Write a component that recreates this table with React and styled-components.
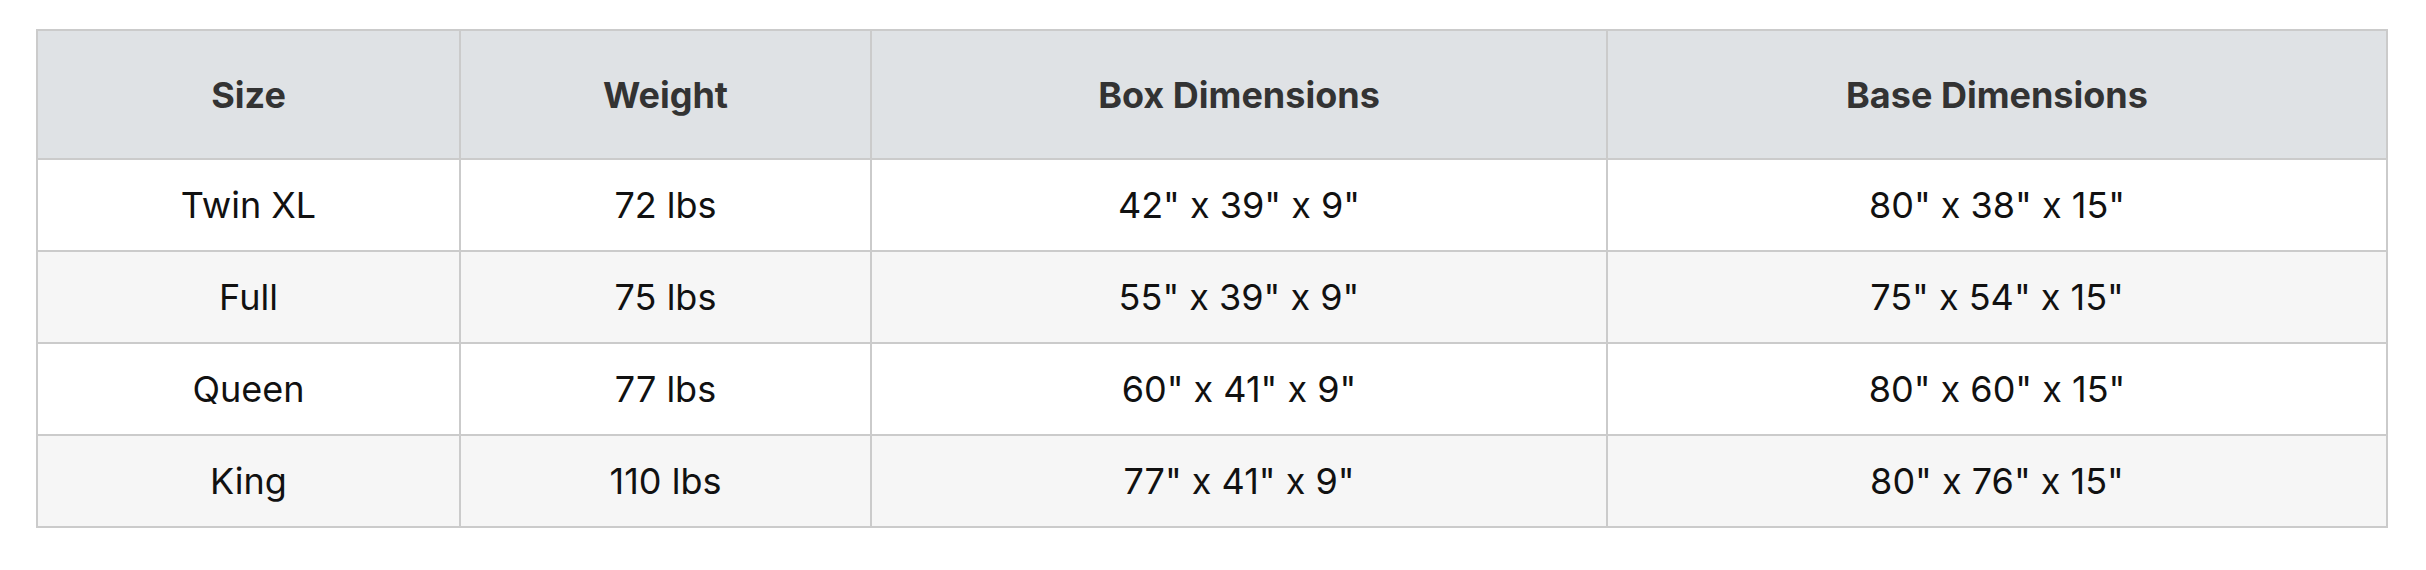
import React from 'react';
import styled, { createGlobalStyle } from 'styled-components';

const GlobalStyle = createGlobalStyle`
    body {
        margin: 0;
        background: #fff;
        font-family: Inter, "Open Sans", "Liberation Sans", sans-serif;
    }
`;

const filas = [
    { size: 'Twin XL', weight: '72 lbs', box: '42" x 39" x 9"', base: '80" x 38" x 15"' },
    { size: 'Full', weight: '75 lbs', box: '55" x 39" x 9"', base: '75" x 54" x 15"' },
    { size: 'Queen', weight: '77 lbs', box: '60" x 41" x 9"', base: '80" x 60" x 15"' },
    { size: 'King', weight: '110 lbs', box: '77" x 41" x 9"', base: '80" x 76" x 15"' },
];

const columnas = [
    { titulo: 'Size', ancho: 423 },
    { titulo: 'Weight', ancho: 411 },
    { titulo: 'Box Dimensions', ancho: 736 },
    { titulo: 'Base Dimensions', ancho: 780 },
];

const App = () => {
    return (
        <>
            <GlobalStyle />
            <Contenedor>
                <Tabla>
                    <colgroup>
                        {columnas.map((c) => (
                            <Columna key={c.titulo} $ancho={c.ancho} />
                        ))}
                    </colgroup>
                    <thead>
                        <FilaCabecera>
                            {columnas.map((c) => (
                                <Cabecera key={c.titulo}>{c.titulo}</Cabecera>
                            ))}
                        </FilaCabecera>
                    </thead>
                    <tbody>
                        {filas.map((f, i) => (
                            <Fila key={f.size} $par={i % 2 === 1}>
                                <Celda>{f.size}</Celda>
                                <Celda>{f.weight}</Celda>
                                <Celda>{f.box}</Celda>
                                <Celda>{f.base}</Celda>
                            </Fila>
                        ))}
                    </tbody>
                </Tabla>
            </Contenedor>
        </>
    );
}

const Contenedor = styled.div`
    padding: 29px 0 0 36px;
`;

const Tabla = styled.table`
    width: 2350px;
    border-collapse: collapse;
    table-layout: fixed;
    border: 2px solid #cbcbcb;
`;

const Columna = styled.col`
    width: ${(p) => p.$ancho}px;
`;

const FilaCabecera = styled.tr`
    height: 129px;
    background: #dfe2e5;
`;

const Cabecera = styled.th`
    border: 2px solid #cbcbcb;
    font-size: 36px;
    font-weight: 700;
    color: #333;
    text-align: center;
    vertical-align: middle;
    padding: 0;
`;

const Fila = styled.tr`
    height: 92px;
    background: ${(p) => (p.$par ? '#f6f6f6' : '#fff')};
`;

const Celda = styled.td`
    border: 2px solid #cbcbcb;
    font-size: 36px;
    font-weight: 400;
    color: #111;
    text-align: center;
    vertical-align: middle;
    padding: 0;
`;

export default App;
